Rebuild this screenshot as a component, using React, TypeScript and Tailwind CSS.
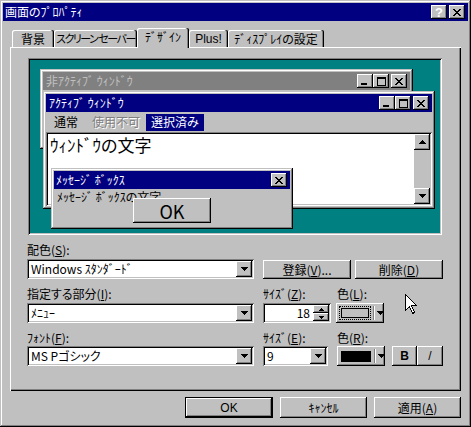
import type { ReactNode } from "react";

const raised =
  "shadow-[inset_-1px_-1px_#000,inset_1px_1px_#fff,inset_-2px_-2px_#808080]";
const sunken =
  "shadow-[inset_1px_1px_#808080,inset_-1px_-1px_#fff,inset_2px_2px_#000,inset_-2px_-2px_#c0c0c0]";
const frame =
  "shadow-[inset_-1px_-1px_#000,inset_1px_1px_#c0c0c0,inset_-2px_-2px_#808080,inset_2px_2px_#fff]";

function Down() {
  return (
    <svg width="7" height="4" viewBox="0 0 7 4" shapeRendering="crispEdges">
      <path d="M0 0h7v1H0zM1 1h5v1H1zM2 2h3v1H2zM3 3h1v1H3z" fill="#000" />
    </svg>
  );
}

function Up() {
  return (
    <svg width="7" height="4" viewBox="0 0 7 4" shapeRendering="crispEdges">
      <path d="M3 0h1v1H3zM2 1h3v1H2zM1 2h5v1H1zM0 3h7v1H0z" fill="#000" />
    </svg>
  );
}

function Cap({ kind }: { kind: "min" | "max" | "close" | "help" }) {
  return (
    <div className={`w-[16px] h-[14px] bg-[#c0c0c0] ${raised} flex items-center justify-center`}>
      {kind === "min" && (
        <svg width="8" height="7" viewBox="0 0 8 7" shapeRendering="crispEdges">
          <path d="M0 5h6v2H0z" fill="#000" />
        </svg>
      )}
      {kind === "max" && (
        <svg width="9" height="9" viewBox="0 0 9 9" shapeRendering="crispEdges">
          <path d="M0 0h9v2H0zM0 2h1v7H0zM8 2h1v7H8zM1 8h7v1H1z" fill="#000" />
        </svg>
      )}
      {kind === "close" && (
        <svg width="8" height="7" viewBox="0 0 8 7" shapeRendering="crispEdges">
          <path
            d="M0 0h2v1H0zM6 0h2v1H6zM1 1h2v1H1zM5 1h2v1H5zM2 2h4v1H2zM3 3h2v1H3zM2 4h4v1H2zM1 5h2v1H1zM5 5h2v1H5zM0 6h2v1H0zM6 6h2v1H6z"
            fill="#000"
          />
        </svg>
      )}
      {kind === "help" && (
        <span className="text-[13px] font-bold leading-none [font-family:'Liberation_Sans',sans-serif]">?</span>
      )}
    </div>
  );
}

function Combo({ w, text }: { w: string; text: string }) {
  return (
    <div className={`${w} h-[20px] bg-white ${sunken} flex items-center pl-[4px] pr-[2px]`}>
      <span className="flex-1 text-[12px] leading-none whitespace-nowrap">{text}</span>
      <div className={`w-[16px] h-[16px] bg-[#c0c0c0] ${raised} flex items-center justify-center`}>
        <Down />
      </div>
    </div>
  );
}

function Label({ children }: { children: ReactNode }) {
  return <div className="h-[14px] text-[12px] leading-[14px] whitespace-nowrap">{children}</div>;
}

function Tab({ w, children, active }: { w: string; children: ReactNode; active?: boolean }) {
  return active ? (
    <div
      className={`${w} h-[20px] -mb-px relative z-10 bg-[#c0c0c0] rounded-t-[2px] shadow-[inset_-1px_0_#000,inset_-2px_0_#808080,inset_1px_1px_#fff] flex items-center justify-center text-[12px] whitespace-nowrap pb-[2px]`}
    >
      {children}
    </div>
  ) : (
    <div
      className={`${w} h-[17px] bg-[#c0c0c0] rounded-t-[2px] shadow-[inset_-1px_0_#000,inset_-2px_0_#808080,inset_1px_1px_#fff] flex items-center justify-center text-[12px] whitespace-nowrap`}
    >
      {children}
    </div>
  );
}

function Button({ w, h, children, extra }: { w: string; h: string; children: ReactNode; extra?: string }) {
  return (
    <div className={`${w} ${h} bg-[#c0c0c0] ${raised} ${extra ?? ""} flex items-center justify-center text-[12px] leading-none whitespace-nowrap`}>
      {children}
    </div>
  );
}

function Preview() {
  return (
    <div className={`relative w-[414px] h-[177px] bg-[#008080] ${sunken}`}>
      {/* inactive window */}
      <div className={`absolute left-[12px] top-[11px] w-[373px] h-[80px] bg-[#c0c0c0] ${frame} p-[3px]`}>
        <div className="h-[18px] bg-[#808080] flex items-center pl-[3px] pr-[3px] text-[12px] text-[#c0c0c0]">
          <span className="flex-1">非ｱｸﾃｨﾌﾞ ｳｨﾝﾄﾞｳ</span>
          <Cap kind="min" />
          <Cap kind="max" />
          <div className="w-[2px]" />
          <Cap kind="close" />
        </div>
      </div>
      {/* active window */}
      <div className={`absolute left-[15px] top-[33px] w-[392px] h-[118px] bg-[#c0c0c0] ${frame} p-[3px] flex flex-col`}>
        <div className="h-[18px] bg-[#000080] flex items-center pl-[3px] pr-[3px] text-[12px] text-white">
          <span className="flex-1">ｱｸﾃｨﾌﾞ ｳｨﾝﾄﾞｳ</span>
          <Cap kind="min" />
          <Cap kind="max" />
          <div className="w-[2px]" />
          <Cap kind="close" />
        </div>
        <div className="h-[20px] flex items-center text-[12px] pl-[8px]">
          <span className="w-[38px]">通常</span>
          <span className="w-[54px] text-[#808080] [text-shadow:1px_1px_#fff]">使用不可</span>
          <span className="h-[17px] px-[5px] bg-[#000080] text-white flex items-center">選択済み</span>
        </div>
        <div className={`flex-1 bg-white ${sunken} p-[2px] flex`}>
          <div className="flex-1 pl-[2px] pt-[1px] text-[17px] leading-[20px]">ｳｨﾝﾄﾞｳの文字</div>
          <div className="w-[16px] bg-[#c0c0c0] flex flex-col justify-between">
            <div className={`h-[16px] ${raised} bg-[#c0c0c0] flex items-center justify-center`}>
              <Up />
            </div>
            <div className={`h-[16px] ${raised} bg-[#c0c0c0] flex items-center justify-center`}>
              <Down />
            </div>
          </div>
        </div>
      </div>
      {/* message box */}
      <div className={`absolute left-[23px] top-[110px] w-[242px] h-[61px] bg-[#c0c0c0] ${frame} p-[3px]`}>
        <div className="h-[18px] bg-[#000080] flex items-center pl-[2px] pr-[3px] text-[12px] text-white">
          <span className="flex-1">ﾒｯｾｰｼﾞ ﾎﾞｯｸｽ</span>
          <Cap kind="close" />
        </div>
        <div className="pl-[3px] pt-[1px] text-[12px] leading-[14px]">ﾒｯｾｰｼﾞ ﾎﾞｯｸｽの文字</div>
        <div className={`absolute left-[82px] top-[30px] w-[78px] h-[25px] bg-[#c0c0c0] ${raised} flex items-center justify-center text-[18px] leading-none`}>
          OK
        </div>
      </div>
    </div>
  );
}

export default function App() {
  return (
    <div
      className={`relative w-[471px] h-[427px] bg-[#c0c0c0] ${frame} p-[3px] text-black [font-family:'Noto_Sans_CJK_JP','Noto_Sans',sans-serif] [font-feature-settings:'palt'] overflow-hidden`}
    >
      {/* title bar */}
      <div className="h-[18px] bg-[#000080] flex items-center pl-[2px] pr-[3px] text-white text-[12px]">
        <span className="flex-1 leading-none">画面のﾌﾟﾛﾊﾟﾃｨ</span>
        <Cap kind="help" />
        <div className="w-[2px]" />
        <Cap kind="close" />
      </div>

      <div className="px-[7px]">
        {/* tabs */}
        <div className="mt-[7px] h-[19px] pl-[2px] flex items-end">
          <Tab w="w-[42px]">背景</Tab>
          <Tab w="w-[83px]">
            <span className="text-[11px] tracking-[-1.5px]">スクリーン セーバー</span>
          </Tab>
          <Tab w="w-[52px]" active>
            ﾃﾞｻﾞｲﾝ
          </Tab>
          <Tab w="w-[39px]">
            <span className="[font-family:'Liberation_Sans',sans-serif]">Plus!</span>
          </Tab>
          <Tab w="w-[96px]">ﾃﾞｨｽﾌﾟﾚｲの設定</Tab>
        </div>

        {/* panel */}
        <div className="h-[344px] shadow-[inset_1px_1px_#fff,inset_-1px_-1px_#000,inset_-2px_-2px_#808080] pt-[11px]">
          <div className="ml-[18px]">
            <Preview />
          </div>

          <div className="ml-[17px] mt-[8px] flex flex-col">
            {/* row 1 */}
            <div className="flex items-end">
              <div className="w-[227px] flex flex-col">
                <Label>
                  配色(<u>S</u>):
                </Label>
                <div className="mt-[2px]">
                  <Combo w="w-[227px]" text="Windows ｽﾀﾝﾀﾞｰﾄﾞ" />
                </div>
              </div>
              <div className="ml-[9px] flex gap-[4px]">
                <Button w="w-[88px]" h="h-[19px]">
                  登録(<u>V</u>)...
                </Button>
                <Button w="w-[88px]" h="h-[19px]">
                  削除(<u>D</u>)
                </Button>
              </div>
            </div>

            {/* row 2 */}
            <div className="mt-[8px] flex">
              <div className="w-[227px] flex flex-col">
                <Label>
                  指定する部分(<u>I</u>):
                </Label>
                <div className="mt-[2px]">
                  <Combo w="w-[227px]" text="ﾒﾆｭｰ" />
                </div>
              </div>
              <div className="ml-[9px] w-[68px] flex flex-col">
                <Label>
                  ｻｲｽﾞ(<u>Z</u>):
                </Label>
                <div className={`mt-[2px] w-[68px] h-[20px] bg-white ${sunken} flex items-center pr-[2px]`}>
                  <span className="flex-1 text-right pr-[3px] text-[12px] leading-none">18</span>
                  <div className="w-[16px] h-[16px] flex flex-col">
                    <div className={`h-[8px] bg-[#c0c0c0] ${raised} flex items-center justify-center`}>
                      <svg width="5" height="3" viewBox="0 0 5 3" shapeRendering="crispEdges">
                        <path d="M2 0h1v1H2zM1 1h3v1H1zM0 2h5v1H0z" fill="#000" />
                      </svg>
                    </div>
                    <div className={`h-[8px] bg-[#c0c0c0] ${raised} flex items-center justify-center`}>
                      <svg width="5" height="3" viewBox="0 0 5 3" shapeRendering="crispEdges">
                        <path d="M0 0h5v1H0zM1 1h3v1H1zM2 2h1v1H2z" fill="#000" />
                      </svg>
                    </div>
                  </div>
                </div>
              </div>
              <div className="ml-[5px] w-[48px] flex flex-col">
                <div className="pl-px">
                  <Label>
                    色(<u>L</u>):
                  </Label>
                </div>
                <div className={`mt-[2px] w-[48px] h-[20px] bg-[#c0c0c0] ${raised} flex items-center pl-[3px]`}>
                  <div className="w-[32px] h-[14px] border border-dotted border-black flex items-center justify-center">
                    <div className="w-[28px] h-[10px] border border-black" />
                  </div>
                  <div className="ml-[2px] h-[14px] border-l border-[#808080] bg-white w-[2px]" />
                  <div className="ml-[2px]">
                    <Down />
                  </div>
                </div>
              </div>
            </div>

            {/* row 3 */}
            <div className="mt-[8px] flex">
              <div className="w-[227px] flex flex-col">
                <Label>
                  ﾌｫﾝﾄ(<u>F</u>):
                </Label>
                <div className="mt-[1px]">
                  <Combo w="w-[227px]" text="MS Pゴシック" />
                </div>
              </div>
              <div className="ml-[9px] w-[68px] flex flex-col">
                <Label>
                  ｻｲｽﾞ(<u>E</u>):
                </Label>
                <div className="mt-[1px]">
                  <Combo w="w-[65px]" text="9" />
                </div>
              </div>
              <div className="ml-[6px] w-[48px] flex flex-col">
                <Label>
                  色(<u>R</u>):
                </Label>
                <div className={`mt-[1px] w-[48px] h-[20px] bg-[#c0c0c0] ${raised} flex items-center pl-[4px]`}>
                  <div className="w-[30px] h-[11px] bg-black" />
                  <div className="ml-[3px] h-[14px] border-l border-[#808080] w-[2px] bg-white" />
                  <div className="ml-[2px]">
                    <Down />
                  </div>
                </div>
              </div>
              <div className="ml-[7px] flex flex-col">
                <div className="h-[14px]" />
                <div className="mt-[1px] flex">
                  <Button w="w-[25px]" h="h-[20px]">
                    <span className="font-bold text-[12px] [font-family:'Liberation_Sans',sans-serif]">B</span>
                  </Button>
                  <Button w="w-[26px]" h="h-[20px]">
                    <span className="text-[12px] [font-family:'Liberation_Sans',sans-serif]">/</span>
                  </Button>
                </div>
              </div>
            </div>
          </div>
        </div>

        {/* bottom buttons */}
        <div className="mt-[6px] flex justify-end gap-[7px]">
          <Button w="w-[88px]" h="h-[21px]" extra="border border-black">
            <span className="[font-family:'Liberation_Sans',sans-serif]">OK</span>
          </Button>
          <Button w="w-[87px]" h="h-[21px]">
            ｷｬﾝｾﾙ
          </Button>
          <Button w="w-[87px]" h="h-[21px]">
            適用(<u>A</u>)
          </Button>
        </div>
      </div>

      {/* mouse cursor */}
      <svg className="absolute left-[405px] top-[294px]" width="13" height="21" viewBox="0 0 13 21" shapeRendering="crispEdges">
        <path d="M0.5 0.5V16.5L4.5 12.5L7.5 19.5L9.5 18.5L6.5 11.5H11.5Z" fill="#fff" stroke="#000" />
      </svg>
    </div>
  );
}
